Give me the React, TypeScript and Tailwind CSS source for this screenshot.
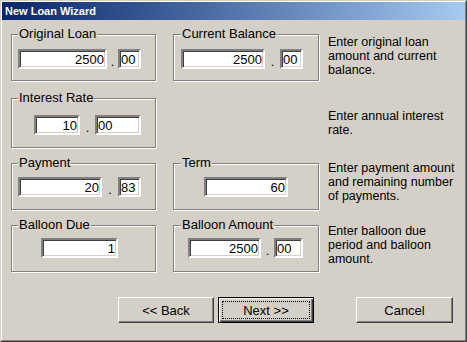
import React from "react";

const font = "font-['Liberation_Sans',Arial,Helvetica,sans-serif]";

function Box({ cls, value, left }: { cls: string; value: string; left?: boolean }) {
  return (
    <div
      className={`h-[20px] shrink-0 bg-white border-2 border-t-[#808080] border-l-[#808080] border-b-white border-r-white shadow-[inset_1px_1px_0_#404040,inset_-1px_-1px_0_#d4d0c8] flex items-center text-[13px] leading-none text-black ${
        left ? "justify-start pl-[1px]" : "justify-end pr-[1px]"
      } ${cls}`}
    >
      {value}
    </div>
  );
}

function Dot({ cls }: { cls: string }) {
  return <span className={`shrink-0 text-center text-[13px] leading-[14px] self-end ${cls}`}>.</span>;
}

function Group({
  label,
  cls,
  children,
}: {
  label: string;
  cls: string;
  children: React.ReactNode;
}) {
  return (
    <fieldset
      className={`m-0 min-w-0 shrink-0 border border-[#808080] shadow-[inset_1px_1px_0_#ffffff,1px_1px_0_#ffffff] ${cls}`}
    >
      <legend className="px-[1px] text-[13px] leading-[14px] bg-[#d4d0c8] text-black">{label}</legend>
      <div className="flex items-end">{children}</div>
    </fieldset>
  );
}

function Desc({ cls, lines }: { cls: string; lines: string[] }) {
  return (
    <div className={`ml-[9px] text-[12.5px] leading-[14px] text-black whitespace-nowrap ${cls}`}>
      {lines.map((l) => (
        <div key={l}>{l}</div>
      ))}
    </div>
  );
}

function Button({ label, isDefault, cls }: { label: string; isDefault?: boolean; cls: string }) {
  if (isDefault) {
    return (
      <button
        className={`h-[26px] w-[96px] shrink-0 border border-black bg-[#d4d0c8] shadow-[inset_1px_1px_0_#ffffff,inset_-1px_-1px_0_#404040,inset_-2px_-2px_0_#808080] outline-1 outline-dotted outline-black outline-offset-[-5px] text-[13px] leading-none text-black ${cls}`}
      >
        {label}
      </button>
    );
  }
  return (
    <button
      className={`h-[26px] shrink-0 border border-t-white border-l-white border-r-[#404040] border-b-[#404040] bg-[#d4d0c8] shadow-[inset_-1px_-1px_0_#808080] text-[13px] leading-none text-black ${cls}`}
    >
      {label}
    </button>
  );
}

export default function App() {
  return (
    <div
      className={`w-[467px] h-[342px] bg-[#d4d0c8] border border-t-[#d4d0c8] border-l-[#d4d0c8] border-r-[#404040] border-b-[#404040] ${font}`}
    >
      <div className="h-full border border-t-white border-l-white border-r-[#808080] border-b-[#808080] flex flex-col">
        <div className="h-[18px] shrink-0 bg-linear-to-r from-[#0a246a] to-[#a6caf0] flex items-center pl-[3px] text-white font-bold text-[11px] leading-none">
          New Loan Wizard
        </div>

        <div className="pl-[9px] pt-[7px] flex flex-col">
          {/* Row 1 */}
          <div className="flex items-start">
            <Group label="Original Loan" cls="w-[145px] h-[54px] px-[6px] pt-[8px]">
              <Box cls="w-[89px]" value="2500" />
              <Dot cls="w-[11px]" />
              <Box cls="w-[23px]" value="00" left />
            </Group>
            <Group label="Current Balance" cls="ml-[17px] w-[146px] h-[54px] px-[7px] pt-[8px]">
              <Box cls="w-[84px]" value="2500" />
              <Dot cls="w-[15px]" />
              <Box cls="w-[23px]" value="00" left />
            </Group>
            <Desc cls="pt-[8px]" lines={["Enter original loan", "amount and current", "balance."]} />
          </div>

          {/* Row 2 */}
          <div className="flex items-start mt-[10px]">
            <Group label="Interest Rate" cls="w-[145px] h-[57px] px-[6px] pt-[10px]">
              <div className="ml-[16px] flex items-end">
                <Box cls="w-[46px]" value="10" />
                <Dot cls="w-[15px]" />
                <Box cls="w-[46px]" value="00" left />
              </div>
            </Group>
            <div className="ml-[17px] w-[146px] shrink-0" />
            <Desc cls="pt-[18px]" lines={["Enter annual interest", "rate."]} />
          </div>

          {/* Row 3 */}
          <div className="flex items-start mt-[8px]">
            <Group label="Payment" cls="w-[145px] h-[54px] px-[6px] pt-[7px]">
              <Box cls="w-[84px]" value="20" />
              <Dot cls="w-[16px]" />
              <Box cls="w-[23px]" value="83" left />
            </Group>
            <Group label="Term" cls="ml-[17px] w-[146px] h-[54px] px-[7px] pt-[7px]">
              <div className="ml-[23px] flex">
                <Box cls="w-[84px]" value="60" />
              </div>
            </Group>
            <Desc cls="pt-[5px]" lines={["Enter payment amount", "and remaining number", "of payments."]} />
          </div>

          {/* Row 4 */}
          <div className="flex items-start mt-[8px]">
            <Group label="Balloon Due" cls="w-[145px] h-[54px] px-[6px] pt-[6px]">
              <div className="ml-[23px] flex">
                <Box cls="w-[77px]" value="1" />
              </div>
            </Group>
            <Group label="Balloon Amount" cls="ml-[17px] w-[146px] h-[54px] px-[7px] pt-[6px]">
              <div className="ml-[7px] flex items-end">
                <Box cls="w-[73px]" value="2500" />
                <Dot cls="w-[13px]" />
                <Box cls="w-[29px]" value="00" left />
              </div>
            </Group>
            <Desc cls="pt-[6px]" lines={["Enter balloon due", "period and balloon", "amount."]} />
          </div>

          {/* Buttons */}
          <div className="flex mt-[25px] pl-[107px]">
            <Button label="<< Back" cls="w-[96px]" />
            <Button label="Next >>" isDefault cls="ml-[4px]" />
            <Button label="Cancel" cls="ml-[42px] w-[97px]" />
          </div>
        </div>
      </div>
    </div>
  );
}
